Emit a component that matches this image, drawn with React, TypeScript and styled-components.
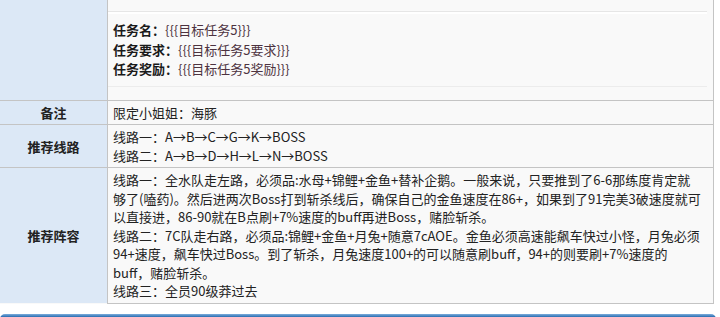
import React from "react";
import styled, { createGlobalStyle } from "styled-components";

const Global = createGlobalStyle`
  html, body { margin: 0; padding: 0; background: #ffffff; }
  body {
    font-family: "Noto Sans CJK SC", "Noto Sans", sans-serif;
    font-size: 13px;
    color: #222222;
  }
`;

const Page = styled.div`
  width: 720px;
  height: 317px;
  overflow: hidden;
  background: #ffffff;
`;

const InfoTable = styled.table`
  width: 714px;
  border-collapse: collapse;
  table-layout: fixed;
  background: #f9f9f9;
`;

const Row = styled.tr<{ $top?: boolean }>`
  border-top: ${(p) => (p.$top ? "none" : "1px solid #c4c4c4")};
`;

const Head = styled.th`
  width: 107px;
  padding: 0;
  background: #dce8f6;
  border-right: 1px solid #c4c4c4;
  font-weight: bold;
  font-size: 13px;
  color: #222222;
  text-align: center;
  vertical-align: middle;
`;

const Cell = styled.td`
  padding: 3px 5px 2px 5px;
  border-right: 1px solid #c4c4c4;
  border-bottom: 1px solid #c4c4c4;
  line-height: 18.5px;
  white-space: nowrap;
  vertical-align: middle;
  color: #222222;
`;

const TaskCell = styled.td`
  padding: 11px 6px 11px 0;
  border-right: 1px solid #c4c4c4;
  height: 100px;
  box-sizing: border-box;
  vertical-align: top;
`;

const TaskBox = styled.div`
  border-top: 1px solid #e6e6e6;
  box-shadow: inset 0 2px 0 #ffffff;
  border-bottom: 1px solid #ececec;
  padding: 8px 0 7px 5px;
  line-height: 19.5px;
  white-space: nowrap;
`;

const Label = styled.b`
  font-weight: bold;
  color: #1a1a1a;
`;

const Param = styled.span`
  color: #4d3340;
`;

const Footer = styled.div`
  margin-top: 10px;
  width: 716px;
  height: 8px;
  border-radius: 5px 5px 0 0;
  background: linear-gradient(#6ea2d4 0, #6ea2d4 1px, #3677b8 2px, #2f6fae 100%);
`;

const tasks: [string, string][] = [
  ["任务名", "{{{目标任务5}}}"],
  ["任务要求", "{{{目标任务5要求}}}"],
  ["任务奖励", "{{{目标任务5奖励}}}"],
];

const routes = ["线路一：A→B→C→G→K→BOSS", "线路二：A→B→D→H→L→N→BOSS"];

const lineup = [
  "线路一：全水队走左路，必须品:水母+锦鲤+金鱼+替补企鹅。一般来说，只要推到了6-6那练度肯定就",
  "够了(嗑药)。然后进两次Boss打到斩杀线后，确保自己的金鱼速度在86+，如果到了91完美3破速度就可",
  "以直接进，86-90就在B点刷+7%速度的buff再进Boss，赌脸斩杀。",
  "线路二：7C队走右路，必须品:锦鲤+金鱼+月兔+随意7cAOE。金鱼必须高速能飙车快过小怪，月兔必须",
  "94+速度，飙车快过Boss。到了斩杀，月兔速度100+的可以随意刷buff，94+的则要刷+7%速度的",
  "buff，赌脸斩杀。",
  "线路三：全员90级莽过去",
];

const Lines = ({ items }: { items: string[] }) => (
  <>
    {items.map((t, i) => (
      <React.Fragment key={i}>
        {i > 0 && <br />}
        {t}
      </React.Fragment>
    ))}
  </>
);

export default function App() {
  return (
    <Page>
      <Global />
      <InfoTable>
        <tbody>
          <Row $top>
            <Head />
            <TaskCell>
              <TaskBox>
                {tasks.map(([k, v], i) => (
                  <React.Fragment key={k}>
                    {i > 0 && <br />}
                    <Label>{k}：</Label>
                    <Param>{v}</Param>
                  </React.Fragment>
                ))}
              </TaskBox>
            </TaskCell>
          </Row>
          <Row>
            <Head>备注</Head>
            <Cell>限定小姐姐：海豚</Cell>
          </Row>
          <Row>
            <Head>推荐线路</Head>
            <Cell>
              <Lines items={routes} />
            </Cell>
          </Row>
          <Row>
            <Head>推荐阵容</Head>
            <Cell>
              <Lines items={lineup} />
            </Cell>
          </Row>
        </tbody>
      </InfoTable>
      <Footer />
    </Page>
  );
}
